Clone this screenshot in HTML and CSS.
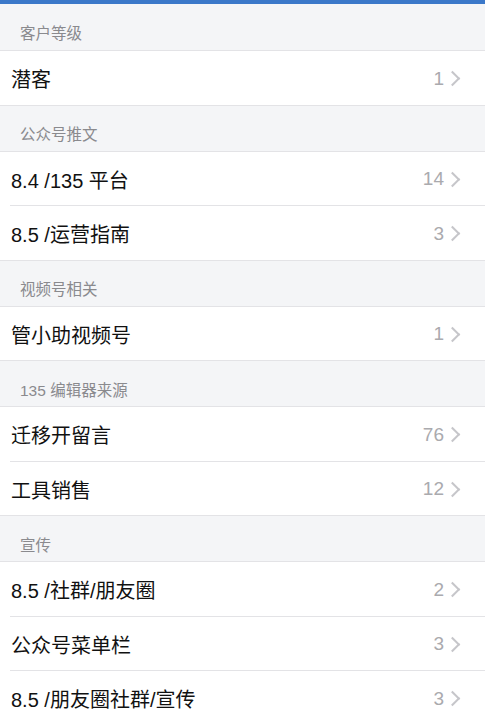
FILE: index.html
```html
<!DOCTYPE html>
<html lang="zh-CN">
<head>
    <meta charset="UTF-8">
    <title>分组</title>
    <link rel="stylesheet" href="styles.css">
</head>
<body>
    <div class="topbar"></div>

    <div class="group-title first">客户等级</div>
    <ul class="list">
        <li class="row"><span class="name">潜客</span><span class="count">1</span><span class="arrow"></span></li>
    </ul>

    <div class="group-title">公众号推文</div>
    <ul class="list">
        <li class="row"><span class="name">8.4 /135 平台</span><span class="count">14</span><span class="arrow"></span></li>
        <li class="row"><span class="name">8.5 /运营指南</span><span class="count">3</span><span class="arrow"></span></li>
    </ul>

    <div class="group-title">视频号相关</div>
    <ul class="list">
        <li class="row"><span class="name">管小助视频号</span><span class="count">1</span><span class="arrow"></span></li>
    </ul>

    <div class="group-title">135 编辑器来源</div>
    <ul class="list">
        <li class="row"><span class="name">迁移开留言</span><span class="count">76</span><span class="arrow"></span></li>
        <li class="row"><span class="name">工具销售</span><span class="count">12</span><span class="arrow"></span></li>
    </ul>

    <div class="group-title">宣传</div>
    <ul class="list">
        <li class="row"><span class="name">8.5 /社群/朋友圈</span><span class="count">2</span><span class="arrow"></span></li>
        <li class="row"><span class="name">公众号菜单栏</span><span class="count">3</span><span class="arrow"></span></li>
        <li class="row"><span class="name">8.5 /朋友圈社群/宣传</span><span class="count">3</span><span class="arrow"></span></li>
    </ul>
</body>
</html>
```

FILE: styles.css
```css
body {
    margin: 0;
    background: #f4f5f7;
    font-family: "Liberation Sans", "Noto Sans CJK SC", sans-serif;
    color: #111;
}
.topbar {
    height: 4px;
    background: #3b78c9;
}
.group-title {
    height: 46px;
    padding: 10px 20px 0;
    display: flex;
    align-items: center;
    box-sizing: border-box;
    font-size: 15.5px;
    color: #8a8a8e;
    border-bottom: 1px solid #e3e3e6;
}
.group-title.first {
    height: 47px;
}
.list {
    list-style: none;
    margin: 0;
    padding: 0;
    background: #fff;
    border-bottom: 1px solid #e3e3e6;
}
.row {
    height: 53.5px;
    box-sizing: border-box;
    display: flex;
    align-items: center;
    padding: 2px 25px 0 11px;
}
.row + .row {
    height: 54.5px;
    border-top: 1px solid #e3e3e6;
    margin-left: 10px;
    padding-left: 1px;
}
.name {
    flex: 1;
    font-size: 20px;
}
.count {
    font-size: 19px;
    color: #aaaaae;
}
.arrow {
    width: 9px;
    height: 9px;
    border-top: 2px solid #c6c6ca;
    border-right: 2px solid #c6c6ca;
    transform: rotate(45deg);
    margin-left: 3px;
    margin-right: 2px;
}
```
